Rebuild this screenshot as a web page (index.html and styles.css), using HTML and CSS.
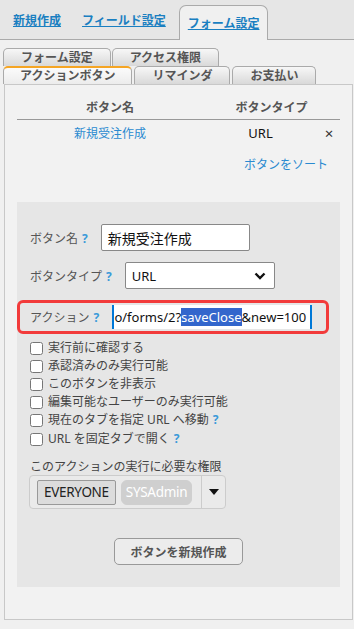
FILE: index.html
```html
<!DOCTYPE html>
<html lang="ja">
  <head>
    <meta charset="UTF-8" />
    <title>フォーム設定 - アクションボタン</title>
    <link rel="stylesheet" href="styles.css">
  </head>
  <body>
    <div class="top-tabs">
      <a class="top-tab" href="#">新規作成</a>
      <a class="top-tab" href="#">フィールド設定</a>
      <a class="top-tab active" href="#">フォーム設定</a>
    </div>

    <div class="sub-tabs">
      <div class="tab-row">
        <div class="sub-tab">フォーム設定</div>
        <div class="sub-tab">アクセス権限</div>
      </div>
      <div class="tab-row second">
        <div class="sub-tab active">アクションボタン</div>
        <div class="sub-tab">リマインダ</div>
        <div class="sub-tab">お支払い</div>
      </div>
    </div>

    <div class="panel">
      <table class="button-list">
        <thead>
          <tr>
            <th class="col-name">ボタン名</th>
            <th colspan="2">ボタンタイプ</th>
          </tr>
        </thead>
        <tbody>
          <tr>
            <td class="col-name"><a href="#">新規受注作成</a></td>
            <td class="col-type">URL</td>
            <td class="col-del">×</td>
          </tr>
        </tbody>
      </table>
      <div class="sort-link"><a href="#">ボタンをソート</a></div>

      <div class="form-box">
        <div class="field">
          <span class="label">ボタン名<span class="help">?</span></span>
          <div class="text-input name-input">新規受注作成</div>
        </div>

        <div class="field">
          <span class="label">ボタンタイプ<span class="help">?</span></span>
          <div class="text-input select-input">
            <span>URL</span>
            <svg width="12" height="8" viewBox="0 0 12 8">
              <path d="M1.5 1.5 L6 6 L10.5 1.5" fill="none" stroke="#111" stroke-width="2.4" />
            </svg>
          </div>
        </div>

        <div class="field action-field">
          <span class="label">アクション<span class="help">?</span></span>
          <div class="text-input action-input">
            <span class="action-text">o/forms/2?<span class="selected">saveClose</span>&amp;new=100</span>
          </div>
        </div>

        <ul class="options">
          <li><label><input type="checkbox" /> 実行前に確認する</label></li>
          <li><label><input type="checkbox" /> 承認済みのみ実行可能</label></li>
          <li><label><input type="checkbox" /> このボタンを非表示</label></li>
          <li><label><input type="checkbox" /> 編集可能なユーザーのみ実行可能</label></li>
          <li><label><input type="checkbox" /> 現在のタブを指定 URL へ移動<span class="help">?</span></label></li>
          <li class="tall"><label><input type="checkbox" /> URL を固定タブで開く<span class="help">?</span></label></li>
        </ul>

        <div class="perm-title">このアクションの実行に必要な権限</div>
        <div class="multi-select">
          <div class="tags">
            <span class="tag">EVERYONE</span>
            <span class="tag off">SYSAdmin</span>
          </div>
          <div class="caret">
            <svg width="10" height="6" viewBox="0 0 10 6"><path d="M0 0 H10 L5 6 Z" fill="#111" /></svg>
          </div>
        </div>

        <div class="create-row">
          <button class="create-btn">ボタンを新規作成</button>
        </div>
      </div>
    </div>
  </body>
</html>
```

FILE: styles.css
```css
body {
  margin: 0;
  background: #f0f0f0;
  font-family: "Noto Sans", "Noto Sans CJK JP", sans-serif;
  font-size: 12px;
  color: #333;
  width: 354px;
  height: 629px;
  overflow: hidden;
}
a {
  color: #2a8ad0;
  text-decoration: none;
}

/* top tabs */
.top-tabs {
  display: flex;
  align-items: flex-end;
  gap: 3px;
  height: 39px;
  padding-left: 4px;
  background: #e6e6e6;
  border-bottom: 1px solid #aaa;
}
.top-tab {
  display: flex;
  align-items: center;
  height: 30px;
  padding: 0 9px 4px;
  color: #1a7fc1;
  font-weight: bold;
  font-size: 12px;
  text-decoration: underline;
}
.top-tab.active {
  height: 34px;
  padding: 0 8px 0;
  margin-left: 1px;
  margin-bottom: -1px;
  background: #f0f0f0;
  border: 1px solid #aaa;
  border-bottom: none;
  border-radius: 7px 7px 0 0;
}

/* sub tabs */
.sub-tabs {
  padding: 8px 0 0 3px;
}
.tab-row {
  display: flex;
  gap: 1px;
}
.tab-row.second {
  gap: 2px;
}
.sub-tab {
  height: 17px;
  padding: 0 17px;
  line-height: 18px;
  font-weight: bold;
  color: #555;
  background: linear-gradient(#f7f7f7, #d9d9d9);
  border: 1px solid #aaa;
  border-bottom: none;
  border-radius: 5px 5px 0 0;
}
.sub-tab.active {
  padding: 0 16px;
  height: 16px;
  line-height: 16px;
  border-top: 2px solid #f5a524;
  background: linear-gradient(#fbfbfb, #ececec);
}

/* panel */
.panel {
  margin: 0 1px 0 4px;
  padding: 9px 12px 32px;
  background: #f2f2f2;
  border: 1px solid #c8c8c8;
}
.button-list {
  width: 100%;
  border-collapse: collapse;
}
.button-list th {
  height: 25px;
  padding: 0;
  color: #555;
  font-weight: bold;
  text-align: center;
  border-bottom: 1px solid #999;
}
.button-list td {
  height: 25px;
  padding: 0;
  text-align: center;
}
.col-name {
  width: 186px;
}
.col-type {
  color: #111;
  font-size: 13px;
}
.col-del {
  width: 22px;
  font-size: 15px;
  color: #333;
  text-align: left;
}
.sort-link {
  margin-top: 11px;
  padding-right: 12px;
  line-height: 18px;
  text-align: right;
}

/* form box */
.form-box {
  margin-top: 28px;
  padding: 22px 0 22px;
  background: #e6e6e6;
}
.field {
  display: flex;
  align-items: center;
  margin: 0 0 11px 13px;
}
.label {
  color: #555;
  font-size: 12px;
  margin-right: 13px;
}
.help {
  margin-left: 4px;
  color: #3a9ad9;
  font-weight: bold;
}
.text-input {
  box-sizing: border-box;
  height: 27px;
  padding: 0 6px;
  display: flex;
  align-items: center;
  background: #fff;
  border: 1px solid #888;
  border-radius: 2px;
  color: #111;
  font-size: 14px;
}
.name-input {
  width: 149px;
}
.select-input {
  width: 150px;
  justify-content: space-between;
  padding-right: 8px;
  font-size: 13px;
}
.action-field {
  margin: 0 11px 5px 0;
  padding: 2px 0 2px 10px;
  border: 3px solid #f23b3b;
  border-radius: 6px;
}
.action-field .label {
  margin-right: 13px;
}
.action-input {
  width: 200px;
  height: 24px;
  padding: 0 4px 0 2px;
  justify-content: flex-end;
  overflow: hidden;
  white-space: nowrap;
  border: 1px solid #0078d7;
  border-width: 0 2px;
  border-radius: 0;
  font-size: 13px;
}
.action-text {
  flex-shrink: 0;
}
.selected {
  background: #3366cc;
  color: #fff;
}

/* checkboxes */
.options {
  list-style: none;
  margin: 0;
  padding: 0 0 0 13px;
}
.options li {
  height: 18px;
  line-height: 18px;
  color: #444;
}
.options li.tall {
  height: 20px;
  line-height: 20px;
}
.options label {
  display: flex;
  align-items: center;
}
.options input {
  margin: 0 5px 0 0;
  width: 13px;
  height: 13px;
}

/* permissions */
.perm-title {
  margin: 8px 0 0 13px;
  color: #444;
}
.multi-select {
  display: flex;
  width: 195px;
  height: 32px;
  margin-left: 12px;
  background: #eaeaea;
  border: 1px solid #ccc;
  border-radius: 4px;
}
.tags {
  display: flex;
  align-items: center;
  gap: 5px;
  padding-left: 7px;
  width: 164px;
  border-right: 1px solid #ccc;
}
.tag {
  height: 23px;
  line-height: 23px;
  padding: 0 6px;
  font-size: 13.5px;
  color: #222;
  background: #dcdcdc;
  border: 1px solid #999;
  border-radius: 2px;
  letter-spacing: -0.3px;
}
.tag.off {
  padding: 0 4px;
  color: #fff;
  background: #cfcfcf;
  border-color: #cfcfcf;
  border-radius: 6px;
}
.caret {
  flex: 1;
  display: flex;
  align-items: center;
  justify-content: center;
}

.create-row {
  display: flex;
  justify-content: center;
  margin-top: 29px;
}
.create-btn {
  height: 27px;
  padding: 0 15px;
  font-family: "Noto Sans", "Noto Sans CJK JP", sans-serif;
  font-size: 12px;
  font-weight: bold;
  color: #555;
  background: #ececec;
  border: 1px solid #999;
  border-radius: 5px;
}
```
